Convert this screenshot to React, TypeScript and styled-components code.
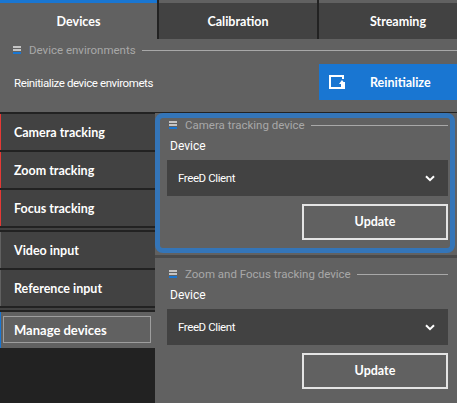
import React from "react";
import styled, { createGlobalStyle } from "styled-components";

const Global = createGlobalStyle`
  html, body { margin: 0; padding: 0; background: #222; }
  body { font-family: Roboto, "Liberation Sans", Arial, sans-serif; font-size: 12px; color: #fff; }
`;
const Page = styled.div`
  width: 457px; height: 403px; overflow: hidden; background: #222;
  display: flex; flex-direction: column;
`;
const TabBar = styled.div`
  display: grid; grid-template-columns: 157px 158px 158px; column-gap: 2px; height: 39px; flex: none;
  background: #222;
`;
const Strong = `font-family: Lato, "Liberation Sans", Arial, sans-serif; font-weight: 700; font-size: 12.5px; color: #fff;`;
const Tab = styled.div<{ $active?: boolean }>`
  display: flex; align-items: center; justify-content: center;
  background: ${p => (p.$active ? "#616161" : "#424242")};
  border-top: 3px solid ${p => (p.$active ? "#1976d2" : "#616161")};
  ${Strong}
`;
const EnvPanel = styled.section`
  height: 73px; flex: none; background: #616161; box-sizing: border-box;
  padding: 3px 0 0 13px;
`;
const GroupHead = styled.div<{ $indent?: number }>`
  display: flex; align-items: center; height: 16px; color: #a8a8a8; font-size: 11.5px;
  padding-left: ${p => p.$indent ?? 0}px;
`;
const GroupIcon = styled.span`
  display: flex; flex-direction: column; gap: 1px; width: 8px; margin-right: 8px; flex: none;
  i { display: block; height: 2px; background: #c4c4c4; }
  i:last-child { background: #1976d2; }
`;
const HeadLine = styled.span`
  flex: 1; height: 1px; background: #a8a8a8; margin-left: 6px;
`;
const EnvRow = styled.div`
  display: flex; align-items: center; justify-content: space-between; margin-top: 6px;
`;
const EnvText = styled.span`
  font-size: 11.5px; letter-spacing: -0.4px; color: #fff; margin: 2px 0 0 1px;
`;
const PrimaryButton = styled.div`
  width: 138px; height: 36px; background: #1976d2; display: flex; align-items: center;
  ${Strong} padding-left: 10px; box-sizing: border-box; gap: 25px;
`;
const Main = styled.div`
  flex: 1; display: flex; margin-top: 2px; min-height: 0;
`;
const Sidebar = styled.nav`
  width: 155px; flex: none; display: flex; flex-direction: column;
`;
const NavItem = styled.div<{ $accent?: string }>`
  height: 36px; box-sizing: border-box; flex: none; background: #424242;
  border-left: 1px solid ${p => p.$accent ?? "#616161"};
  display: flex; align-items: center; padding-left: 13px;
  ${Strong} margin-bottom: 2px;
`;
const NavRule = styled.div`
  height: 2px; background: #424242; margin-bottom: 2px; flex: none;
`;
const ManageItem = styled.div`
  height: 36px; flex: none; box-sizing: border-box; background: #616161;
  border-left: 1px solid #1976d2; padding: 4px 4px 5px 2px;
`;
const ManageInner = styled.div`
  height: 100%; box-sizing: border-box; border: 1px solid #9e9e9e; display: flex; align-items: center;
  padding-left: 10px; ${Strong} font-size: 13px;
`;
const Content = styled.div`
  flex: 1; display: flex; flex-direction: column; min-width: 0; margin-top: -1px;
  background: #616161;
`;
const FocusedPanel = styled.section`
  box-sizing: border-box; background: #616161; flex: none; height: 140px;
  margin: 0 2px 0 0; padding: 0 2px 0 7px;
  border: 5px solid #3475b8; border-radius: 8px;
  ${GroupHead} { margin-top: -1px; }
`;
const PanelSep = styled.div`
  height: 3px; margin-top: 2px; margin-bottom: 1px; background: #4a4a4a; flex: none;
`;
const PlainPanel = styled.section`
  box-sizing: border-box; background: #616161; flex: none; height: 144px;
  padding: 7px 9px 0 12px;
`;
const DeviceLabel = styled.div` font-size: 12px; color: #fff; margin: 6px 0 0 3px; height: 15px; line-height: 15px; `;
const Select = styled.div`
  height: 36px; background: #424242; display: flex; align-items: center; justify-content: space-between;
  padding: 0 13px 0 11px; margin-top: 6px; font-size: 11.5px; letter-spacing: -0.4px; color: #fff;
`;
const UpdateRow = styled.div` display: flex; justify-content: flex-end; margin-top: 8px; `;
const OutlineButton = styled.div`
  width: 146px; height: 36px; box-sizing: border-box; border: 2px solid #e4e4e4;
  display: flex; align-items: center; justify-content: center; padding-bottom: 2px;
  ${Strong}
`;

const Head = ({ title, indent }: { title: string; indent?: number }) => (
  <GroupHead $indent={indent}>
    <GroupIcon><i /><i /><i /></GroupIcon>
    {title}
    <HeadLine />
  </GroupHead>
);
const Chevron = () => (
  <svg width="10" height="7" viewBox="0 0 10 7"><path d="M1 1.2 5 5.2 9 1.2" fill="none" stroke="#fff" strokeWidth="2" /></svg>
);
const ReinitIcon = () => (
  <svg width="16" height="14" viewBox="0 0 16 14" fill="none">
    <path d="M15 7V13H1V1H14V4" stroke="#fff" strokeWidth="2" />
    <path d="M13 5 10 9H12V12H14V9H16Z" fill="#fff" />
  </svg>
);
const DeviceBody = ({ title }: { title: string }) => (
  <>
    <Head title={title} indent={2} />
    <DeviceLabel>Device</DeviceLabel>
    <Select>FreeD Client<Chevron /></Select>
    <UpdateRow><OutlineButton>Update</OutlineButton></UpdateRow>
  </>
);

export default function App() {
  return (
    <Page>
      <Global />
      <TabBar>
        <Tab $active>Devices</Tab>
        <Tab>Calibration</Tab>
        <Tab>Streaming</Tab>
      </TabBar>
      <EnvPanel>
        <Head title="Device environments" />
        <EnvRow>
          <EnvText>Reinitialize device enviromets</EnvText>
          <PrimaryButton><ReinitIcon />Reinitialize</PrimaryButton>
        </EnvRow>
      </EnvPanel>
      <Main>
        <Sidebar>
          <NavItem $accent="#e53935">Camera tracking</NavItem>
          <NavItem $accent="#e53935">Zoom tracking</NavItem>
          <NavItem $accent="#e53935">Focus tracking</NavItem>
          <NavRule />
          <NavItem>Video input</NavItem>
          <NavItem>Reference input</NavItem>
          <NavRule />
          <ManageItem><ManageInner>Manage devices</ManageInner></ManageItem>
        </Sidebar>
        <Content>
          <FocusedPanel><DeviceBody title="Camera tracking device" /></FocusedPanel>
          <PanelSep />
          <PlainPanel><DeviceBody title="Zoom and Focus tracking device" /></PlainPanel>
        </Content>
      </Main>
    </Page>
  );
}
